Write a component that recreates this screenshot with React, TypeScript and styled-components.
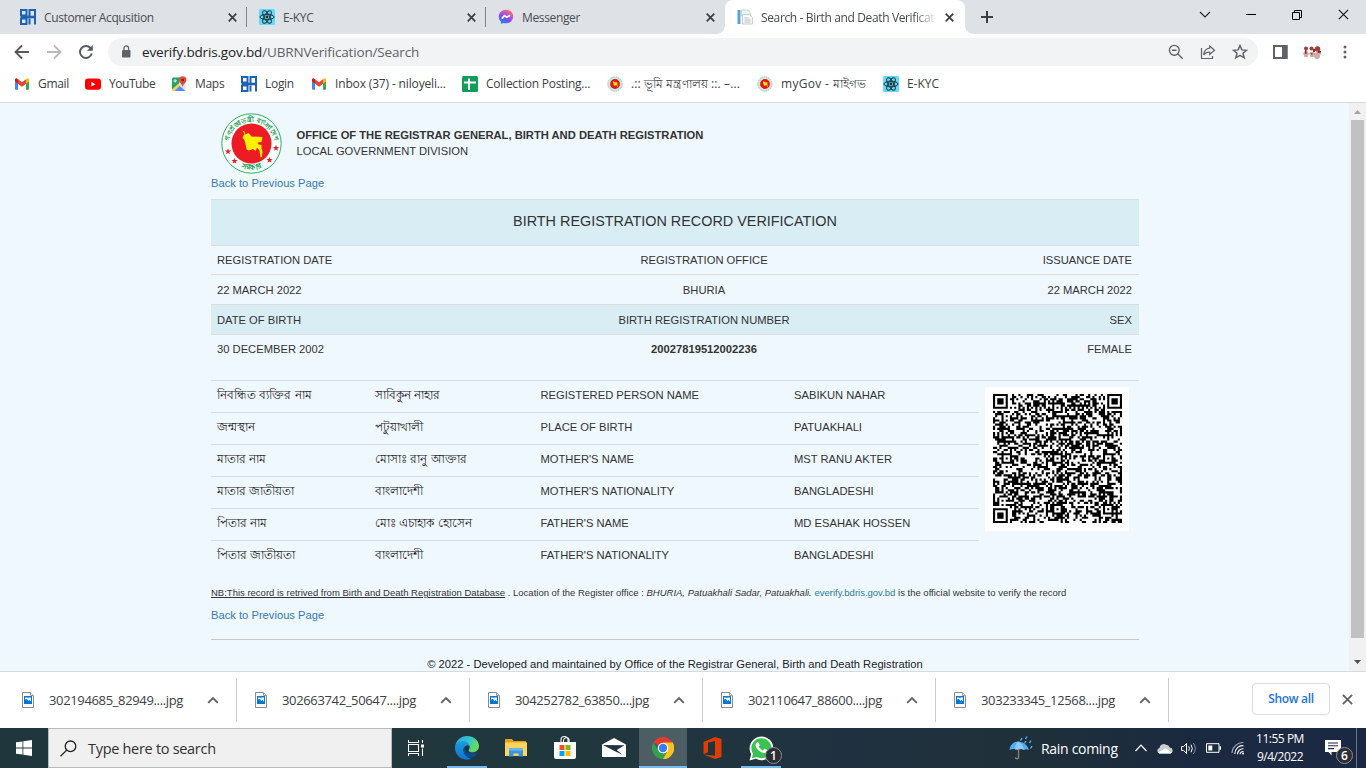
import React from 'react';
import styled, { createGlobalStyle, css } from 'styled-components';

const GlobalStyle = createGlobalStyle`
  * { box-sizing: border-box; }
  html, body { margin: 0; padding: 0; overflow: hidden; }
  body { font-family: "Open Sans", "Noto Sans", sans-serif; font-size: 12px; color: #3c4043; }
  svg { display: block; flex: none; }
`;

const Screen = styled.div`
  width: 1366px;
  height: 768px;
  display: flex;
  flex-direction: column;
  overflow: hidden;
  background: #fff;
`;

/* ---------- browser chrome ---------- */
const TabStrip = styled.div`
  height: 34px;
  flex: none;
  display: flex;
  padding-left: 8px;
  background: #dee1e6;
`;
const Tab = styled.div<{ $active?: boolean; $divider?: boolean }>`
  position: relative;
  width: ${(p) => (p.$active ? 240 : 239)}px;
  display: flex;
  align-items: center;
  padding: 0 ${(p) => (p.$active ? 11 : 10.5)}px 0 12px;
  gap: 8px;
  letter-spacing: -0.36px;
  color: ${(p) => (p.$active ? '#45494d' : '#4a4e52')};
  ${(p) => p.$active && css`
    background: #fff;
    border-radius: 8px 8px 0 0;
    &::before, &::after {
      content: '';
      position: absolute;
      bottom: 0;
      width: 8px;
      height: 8px;
    }
    &::before { left: -8px; background: radial-gradient(circle at 0 0, transparent 7.5px, #fff 8px); }
    &::after { right: -8px; background: radial-gradient(circle at 100% 0, transparent 7.5px, #fff 8px); }
  `}
  ${(p) => p.$divider && css`
    &::after {
      content: '';
      position: absolute;
      right: 0;
      top: 7px;
      width: 1px;
      height: 20px;
      background: #80868b;
    }
  `}
`;
const TabTitle = styled.span<{ $fade?: boolean }>`
  flex: 1;
  min-width: 0;
  white-space: nowrap;
  ${(p) => p.$fade && css`
    mask-image: linear-gradient(90deg, #000 152px, transparent 177px);
  `}
`;
const NewTab = styled.div`
  display: flex;
  align-items: center;
  padding-left: 16px;
`;
const WindowButtons = styled.div`
  margin-left: auto;
  display: grid;
  grid-template-columns: repeat(4, 46px);
  justify-items: center;
  align-items: center;
  height: 29px;
`;
const Toolbar = styled.div`
  height: 36px;
  flex: none;
  display: flex;
  align-items: center;
  padding-left: 14px;
`;
const NavButtons = styled.div`
  display: flex;
  gap: 16px;
  width: 94px;
`;
const Omnibox = styled.div`
  width: 1150px;
  height: 28px;
  border-radius: 14px;
  background: #f1f3f4;
  display: flex;
  align-items: center;
  padding: 0 10px 0 12px;
`;
const Url = styled.div`
  margin-left: 10px;
  flex: 1;
  font-size: 13.5px;
  letter-spacing: -0.16px;
  color: #5f6368;
  white-space: nowrap;
`;
const Host = styled.span`color: #202124;`;
const OmniActions = styled.div`
  display: flex;
  gap: 16px;
`;
const ToolbarActions = styled.div`
  flex: 1;
  display: flex;
  align-items: center;
  padding-left: 15px;
`;
const ProfileSlot = styled.div`margin-left: 14px;`;
const MenuSlot = styled.div`margin-left: 20px;`;
const Bookmarks = styled.div`
  height: 33px;
  flex: none;
  display: flex;
  padding: 0 0 5px 14px;
  border-bottom: 1px solid #d5d8dc;
`;
const Bookmark = styled.div<{ $w: number; $ls?: number }>`
  width: ${(p) => p.$w}px;
  display: flex;
  align-items: center;
  gap: 8px;
  white-space: nowrap;
  line-height: 18px;
  letter-spacing: ${(p) => p.$ls ?? -0.3}px;
`;

/* ---------- web page ---------- */
const Viewport = styled.div`
  height: 568px;
  flex: none;
  display: flex;
  overflow: hidden;
`;
const Page = styled.main`
  flex: 1;
  background: #eff8ff;
  padding: 10px 0 0 211px;
  font-family: "Liberation Sans", Arial, sans-serif;
  font-size: 11.2px;
  color: #333;
  line-height: 16px;
`;
const Content = styled.div`width: 928px;`;
const Masthead = styled.header`
  height: 60px;
  display: flex;
  align-items: center;
  padding-left: 9.5px;
  gap: 15px;
`;
const BackLink = styled.a`
  display: block;
  color: #337ab7;
  line-height: 20px;
`;
const SummaryTable = styled.section`margin-top: 6px;`;
const Banner = styled.h1`
  margin: 0;
  height: 46px;
  border-top: 1px solid #ddd;
  background: #d9edf5;
  text-align: center;
  font-size: 14.4px;
  font-weight: 400;
  line-height: 43px;
`;
const SummaryRow = styled.div<{ $h: number; $band?: boolean; $lh?: number }>`
  height: ${(p) => p.$h}px;
  border-top: 1px solid #ddd;
  background: ${(p) => (p.$band ? '#d9edf5' : 'transparent')};
  display: grid;
  grid-template-columns: 344px 298px 286px;
  line-height: ${(p) => p.$lh ?? 30}px;
`;
const SummaryCell = styled.div<{ $align?: 'center' | 'right'; $strong?: boolean }>`
  padding: 0 ${(p) => (p.$align === 'center' ? 6 : 7)}px 0 6px;
  text-align: ${(p) => p.$align ?? 'left'};
  font-weight: ${(p) => (p.$strong ? 700 : 400)};
`;
const Details = styled.section`
  display: grid;
  grid-template-columns: 768px 160px;
  height: 192px;
`;
const DetailRow = styled.div`
  height: 32px;
  display: grid;
  grid-template-columns: 158px 165.5px 253.5px 191px;
  border-top: 1px solid #ddd;
  line-height: 28px;
`;
const DetailCell = styled.div<{ $bn?: boolean }>`
  padding-left: 6px;
  white-space: nowrap;
  height: 30px;
  ${(p) => p.$bn && css`
    font-size: 12px;
    color: #222;
  `}
`;
const CodeCell = styled.div`
  border-top: 1px solid #ddd;
  padding: 6px 0 0 6px;
`;
const CodeFrame = styled.div`
  width: 144px;
  height: 144px;
  padding: 7px 8px;
  background: #fff;
`;
const Note = styled.p`
  margin: 12px 0 4px;
  font-size: 9.5px;
  line-height: 17px;
  white-space: nowrap;
`;
const NoteLink = styled.a`color: #2b7a94;`;
const Footer = styled.footer`
  margin-top: 14px;
  border-top: 1px solid #c8c8c8;
  padding-top: 16px;
  text-align: center;
  color: #222;
`;
const ScrollTrack = styled.div`
  width: 17px;
  background: #f1f1f1;
  display: flex;
  flex-direction: column;
  align-items: center;
`;
const ScrollThumb = styled.div`
  width: 13px;
  height: 518px;
  background: #c1c1c1;
`;
const ScrollArrow = styled.div<{ $down?: boolean }>`
  height: 17px;
  padding-top: ${(p) => (p.$down ? 6 : 7)}px;
  ${(p) => p.$down && 'margin-top: auto;'}
`;

/* ---------- download shelf ---------- */
const Shelf = styled.div`
  height: 57px;
  flex: none;
  border-top: 1px solid #d5dbe0;
  display: flex;
  align-items: center;
  padding-left: 4px;
`;
const Download = styled.div`
  width: 233px;
  height: 44px;
  border-right: 1px solid #ccc;
  display: flex;
  align-items: center;
  padding: 0 17px 0 18px;
`;
const FileName = styled.span`
  margin-left: 15px;
  flex: 1;
  font-size: 13px;
  letter-spacing: -0.35px;
`;
const ShowAll = styled.button`
  margin: 0 0 2px 83px;
  width: 78px;
  height: 32px;
  border: 1px solid #dadce0;
  border-radius: 4px;
  background: #fff;
  color: #1a73e8;
  font: 600 12px "Open Sans", sans-serif;
  letter-spacing: -0.3px;
  padding: 0 0 1px;
`;
const ShelfClose = styled.div`margin: 0 0 2px 12px;`;

/* ---------- task bar ---------- */
const Taskbar = styled.div`
  height: 40px;
  flex: none;
  display: flex;
  background: linear-gradient(90deg, #20363d 0, #21373e 45%, #1f3140 62%, #1f3039 75%, #1b2940 87%, #1b2843 100%);
  color: #fff;
`;
const Start = styled.div`
  width: 48px;
  display: grid;
  place-items: center;
`;
const SearchBox = styled.div`
  width: 344px;
  background: #f0f0f0;
  border: 1px solid #b9b9b9;
  display: flex;
  align-items: center;
  padding-left: 11px;
  gap: 11px;
  color: #303030;
  font-size: 14.5px;
  letter-spacing: -0.3px;
`;
const Apps = styled.div`
  display: flex;
  gap: 1px;
  margin-left: 3px;
`;
const TaskButton = styled.div<{ $active?: boolean; $running?: boolean }>`
  position: relative;
  width: 48px;
  display: grid;
  place-items: center;
  background: ${(p) => (p.$active ? '#4c5d64' : 'transparent')};
  ${(p) => (p.$active || p.$running) && css`
    &::after {
      content: '';
      position: absolute;
      bottom: 0;
      left: ${p.$active ? 0 : 4}px;
      right: ${p.$active ? 0 : 4}px;
      height: 2px;
      background: #76b9ed;
    }
  `}
`;
const CountBadge = styled.span`
  position: absolute;
  right: 3px;
  top: 19px;
  width: 17px;
  height: 17px;
  border-radius: 50%;
  border: 1px solid #8a8f94;
  background: #2b2e33;
  color: #fff;
  font-size: 12px;
  font-weight: 600;
  line-height: 15px;
  text-align: center;
`;
const Tray = styled.div`
  margin-left: auto;
  width: 357px;
  display: flex;
  align-items: center;
`;
const Weather = styled.div`
  width: 124px;
  display: flex;
  align-items: center;
  gap: 8px;
  font-size: 14px;
  letter-spacing: -0.3px;
  white-space: nowrap;
`;
const TrayIcons = styled.div`
  display: grid;
  grid-template-columns: 16px 32px 16px 32px 18px;
  justify-items: center;
  align-items: center;
`;
const Clock = styled.div`
  width: 66px;
  text-align: center;
  font-size: 12px;
  line-height: 18px;
  letter-spacing: -0.48px;
  padding-bottom: 1px;
`;
const ActionCenter = styled.div`
  position: relative;
  width: 44px;
  height: 40px;
  padding: 12px 0 0 12px;
  margin-right: 4px;
  border-right: 1px solid #68747f;
`;

/* ---------- icons ---------- */
const BuildingIcon = () => (
  <svg width="16" height="16" viewBox="0 0 16 16" fill="none" stroke="#1d62b5" strokeWidth="2">
    <path d="M1 1h5.500v5.500H1zM9.500 6.500V1H15v14.500M9.500 9.500v6M1 9.500h5.500V15H1zM6.500 8v2M9.500 5v3" />
    <path d="M1 8h14" strokeWidth="2.600" />
  </svg>
);
const ReactIcon = () => (
  <svg width="16" height="16" viewBox="0 0 16 16">
    <rect width="16" height="16" rx="1.500" fill="#61dafb" />
    <g fill="none" stroke="#20333b" strokeWidth="1">
      <ellipse cx="8" cy="8" rx="7" ry="2.700" />
      <ellipse cx="8" cy="8" rx="7" ry="2.700" transform="rotate(60 8 8)" />
      <ellipse cx="8" cy="8" rx="7" ry="2.700" transform="rotate(120 8 8)" />
    </g>
    <circle cx="8" cy="8" r="1.400" fill="#20333b" />
  </svg>
);
const MessengerIcon = () => (
  <svg width="16" height="16" viewBox="0 0 16 16">
    <defs>
      <radialGradient id="msgr" cx="20%" cy="100%" r="110%">
        <stop offset="0" stopColor="#0a8cff" />
        <stop offset="0.55" stopColor="#8a45ff" />
        <stop offset="1" stopColor="#ff6a6a" />
      </radialGradient>
    </defs>
    <path d="M8 .8C3.900.8.8 3.800.8 7.700c0 2.100.9 3.900 2.300 5.100v2.300l2.200-1.200c.9.3 1.700.4 2.700.4 4.100 0 7.200-3 7.200-6.800S12.100.8 8 .8z" fill="url(#msgr)" />
    <path d="M3.800 9.600l2.600-3 2.400 1.600 3.400-2" fill="none" stroke="#fff" strokeWidth="1.700" />
  </svg>
);
const DocsIcon = () => (
  <svg width="16" height="16" viewBox="0 0 16 16">
    <rect x="0.500" y="1" width="3" height="14" fill="#58a6d6" />
    <path d="M4.500 1h7l2 3v3h-9z" fill="#eef2f5" stroke="#c6cdd3" strokeWidth=".8" />
    <path d="M5.500 5.500h7l3 3V15h-10z" fill="#f4f6f8" stroke="#bcc4cb" strokeWidth=".8" />
    <path d="M7.500 9h4M7.500 11h6M7.500 13h6" stroke="#b4bcc4" strokeWidth=".8" />
  </svg>
);
const GmailIcon = () => (
  <svg width="16" height="16" viewBox="0 0 16 16">
    <path d="M1 4.500V13c0 .4.400.8.800.8H4V6.500z" fill="#4285f4" />
    <path d="M15 4.500V13c0 .4-.400.8-.800.8H12V6.500z" fill="#34a853" />
    <path d="M4 3.200l4 3.100 4-3.100v4.500l-4 3.100-4-3.100z" fill="#ea4335" />
    <path d="M12 3.200l.9-.600c.9-.700 2.100 0 2.100 1.100v1.600l-3 2.400z" fill="#fbbc04" />
    <path d="M4 3.200l-.9-.600C2.200 1.900 1 2.600 1 3.700v1.600l3 2.400z" fill="#c5221f" />
  </svg>
);
const YouTubeIcon = () => (
  <svg width="16" height="16" viewBox="0 0 16 16">
    <rect x="0" y="2.500" width="16" height="11.300" rx="3" fill="#f00" />
    <path d="M6.400 5.800v4.700l4-2.350z" fill="#fff" />
  </svg>
);
const MapsIcon = () => (
  <svg width="16" height="16" viewBox="0 0 16 16">
    <rect x="1" y="1.500" width="13.500" height="13.500" rx="1.500" fill="#dfe3e6" />
    <path d="M1 3a1.500 1.500 0 0 1 1.500-1.500H9L8 8l-7 6z" fill="#23a566" />
    <path d="M1 13.500l6.500-6 1.800 1.700L3.500 15h-1A1.500 1.500 0 0 1 1 13.500z" fill="#fbd04b" />
    <path d="M3.500 15L8.600 9.900l5.400 4.700-1 .4z" fill="#4c8df6" />
    <path d="M11.700.3a3.700 3.700 0 0 0-3.700 3.700c0 2.600 2.900 3.600 3.700 7 .8-3.400 3.700-4.400 3.700-7A3.700 3.700 0 0 0 11.700.3z" fill="#e5483c" />
    <circle cx="11.700" cy="4" r="1.300" fill="#8c1f17" />
    <path d="M5.800 4.600H4.200v1h.8c-.300 1-2 .7-2-.7s1.300-1.500 1.900-.9" fill="none" stroke="#fff" strokeWidth=".8" />
  </svg>
);
const SheetIcon = () => (
  <svg width="16" height="16" viewBox="0 0 16 16">
    <rect width="16" height="16" rx="1.500" fill="#0f9d58" />
    <path d="M2 6.500h12M7 2.500v11.500" stroke="#fff" strokeWidth="2" />
  </svg>
);
const countryShape = 'M-9-13l2 1 1 3 3-1.500 3 3.500 11 .5-1 5-4 .5 1 2 3 .5v4l1 2-.5 6-1.500.5-1-7-2.500-3-1.500 3.500-2.500-2-4 1.500-2.500-1-1-5.500-1-3.500-2-3 2-3.500z';
const SealIcon = () => (
  <svg width="16" height="16" viewBox="-8 -8 16 16">
    <circle r="7.200" fill="#cfeadb" stroke="#8cc9a8" strokeWidth="1" strokeDasharray="1.500 .8" />
    <circle r="4.900" fill="#e8131c" />
    <path d={countryShape} fill="#fff100" transform="scale(.24)" />
  </svg>
);
const star = 'M0-3.300L.85-1 3.200-1 1.300.5 2 2.800 0 1.400-2 2.800-1.300.5-3.200-1-.85-1z';
const GovernmentSeal = () => (
  <svg width="61" height="61" viewBox="-30.500 -30.500 61 61">
    <defs>
      <path id="ringTop" d="M-22.500 1A22.500 22.500 0 1 1 22.500 1" />
      <path id="ringBottom" d="M-16 21A26.400 26.400 0 0 0 16 21" />
    </defs>
    <circle r="29.700" fill="#fafffd" stroke="#27ae60" strokeWidth="1" />
    <circle r="20" fill="#ed1c24" />
    <path d={countryShape} fill="#fff100" />
    <g fill="#149a4b" fontSize="6.800" fontWeight="700" textAnchor="middle">
      <text><textPath href="#ringTop" startOffset="50%">গণপ্রজাতন্ত্রী বাংলাদেশ</textPath></text>
      <text fontSize="7.500"><textPath href="#ringBottom" startOffset="50%">সরকার</textPath></text>
    </g>
    <g fill="#ed1c24">
      <path d={star} transform="translate(-23.500 8)" />
      <path d={star} transform="translate(-17 17.500)" />
      <path d={star} transform="translate(18 16.500)" />
      <path d={star} transform="translate(24.500 4.500)" />
    </g>
  </svg>
);
const CloseIcon = ({ size = 9, color = '#3c4043', w = 1.8 }: { size?: number; color?: string; w?: number }) => (
  <svg width={size} height={size} viewBox="0 0 10 10" stroke={color} strokeWidth={(w * 10) / size}>
    <path d="M.8.8l8.400 8.400M9.200.8L.8 9.200" />
  </svg>
);
const ImageFileIcon = () => (
  <svg width="12" height="16" viewBox="0 0 12 16">
    <path d="M.5.5h8l3 3v12H.5z" fill="#fafafa" stroke="#8b8b8b" />
    <path d="M8.500.5v3h3" fill="#fff" stroke="#9a9a9a" />
    <rect x="2" y="4" width="8" height="8" fill="#0078d7" />
    <path d="M3 5.500h6v4L7.500 8 6.500 9 5 7 3 7.500z" fill="#fff" />
    <path d="M5 5.500h1.500v1z" fill="#0078d7" />
  </svg>
);

/* ---------- QR pattern ---------- */
const QR_SIZE = 61;
const qrPath = (() => {
  const rings = (dx: number, dy: number, r: number) => {
    const d = Math.max(Math.abs(dx), Math.abs(dy));
    if (d > r) return null;
    return r === 4 ? d !== 2 && d !== 4 : d !== 1;
  };
  const marks: [number, number, number][] = [[3, 3, 4], [57, 3, 4], [3, 57, 4]];
  for (const x of [6, 30, 54]) for (const y of [6, 30, 54]) {
    if (!((x === 6 && y !== 30) || (x === 54 && y === 6))) marks.push([x, y, 2]);
  }
  let seed = 20413;
  let d = '';
  for (let y = 0; y < QR_SIZE; y++) {
    for (let x = 0; x < QR_SIZE; x++) {
      seed = (Math.imul(seed, 1664525) + 1013904223) >>> 0;
      let on = ((seed >>> 16) & 255) < 132;
      if (x === 6 || y === 6) on = (x + y) % 2 === 0;
      for (const [mx, my, r] of marks) {
        const v = rings(x - mx, y - my, r);
        if (v !== null) on = v;
      }
      if (on) d += `M${x} ${y}h1v1h-1z`;
    }
  }
  return d;
})();

/* ---------- data ---------- */
const records = [
  ['নিবন্ধিত ব্যক্তির নাম', 'সাবিকুন নাহার', 'REGISTERED PERSON NAME', 'SABIKUN NAHAR'],
  ['জন্মস্থান', 'পটুয়াখালী', 'PLACE OF BIRTH', 'PATUAKHALI'],
  ['মাতার নাম', 'মোসাঃ রানু আক্তার', "MOTHER'S NAME", 'MST RANU AKTER'],
  ['মাতার জাতীয়তা', 'বাংলাদেশী', "MOTHER'S NATIONALITY", 'BANGLADESHI'],
  ['পিতার নাম', 'মোঃ এচাহাক হোসেন', "FATHER'S NAME", 'MD ESAHAK HOSSEN'],
  ['পিতার জাতীয়তা', 'বাংলাদেশী', "FATHER'S NATIONALITY", 'BANGLADESHI'],
];
const downloads = ['302194685_82949....jpg', '302663742_50647....jpg', '304252782_63850....jpg', '302110647_88600....jpg', '303233345_12568....jpg'];
const bookmarks: [string, React.ReactNode, number, number?][] = [
  ['Gmail', <GmailIcon />, 71],
  ['YouTube', <YouTubeIcon />, 86, -0.45],
  ['Maps', <MapsIcon />, 70],
  ['Login', <BuildingIcon />, 70],
  ['Inbox (37) - niloyeli...', <GmailIcon />, 151, -0.15],
  ['Collection Posting...', <SheetIcon />, 145, -0.24],
  ['.:: ভূমি মন্ত্রণালয় ::. –...', <SealIcon />, 150, 0.1],
  ['myGov - মাইগভ', <SealIcon />, 126, 0.3],
  ['E-KYC', <ReactIcon />, 70, -0.05],
];

export default function App() {
  return (
    <Screen>
      <GlobalStyle />
      <TabStrip>
        <Tab $divider><BuildingIcon /><TabTitle>Customer Acqusition</TabTitle><CloseIcon /></Tab>
        <Tab $divider><ReactIcon /><TabTitle>E-KYC</TabTitle><CloseIcon /></Tab>
        <Tab><MessengerIcon /><TabTitle>Messenger</TabTitle><CloseIcon /></Tab>
        <Tab $active><DocsIcon /><TabTitle $fade>Search - Birth and Death Verificat</TabTitle><CloseIcon /></Tab>
        <NewTab>
          <svg width="12" height="12" viewBox="0 0 12 12" stroke="#3c4043" strokeWidth="2"><path d="M6 0v12M0 6h12" /></svg>
        </NewTab>
        <WindowButtons>
          <svg width="12" height="8" viewBox="0 0 12 8" fill="none" stroke="#222" strokeWidth="1.100"><path d="M1 1l5 5 5-5" /></svg>
          <svg width="10" height="1" viewBox="0 0 10 1"><rect width="10" height="1" fill="#000" /></svg>
          <svg width="10" height="10" viewBox="0 0 10 10" fill="none" stroke="#000"><path d="M.5 2.500h7v7h-7zM2.500 2.500v-2h7v7h-2" /></svg>
          <CloseIcon size={11} color="#111" w={1.100} />
        </WindowButtons>
      </TabStrip>
      <Toolbar>
        <NavButtons>
          <svg width="16" height="16" viewBox="0 0 16 16" fill="none" stroke="#55595e" strokeWidth="1.800"><path d="M15 8H2M8 1.500L1.500 8 8 14.500" /></svg>
          <svg width="16" height="16" viewBox="0 0 16 16" fill="none" stroke="#b8babd" strokeWidth="1.800"><path d="M1 8h13M8 1.500L14.500 8 8 14.500" /></svg>
          <svg width="16" height="16" viewBox="0 0 16 16" fill="none" stroke="#55595e" strokeWidth="1.900"><path d="M13.800 9.500A6 6 0 1 1 12.500 4l1 1.200" /><path d="M14.800 1v5.800H9z" fill="#55595e" stroke="none" /></svg>
        </NavButtons>
        <Omnibox>
          <svg width="12" height="14" viewBox="0 0 12 14"><rect x="2" y="5" width="8.500" height="7.500" rx="1" fill="#5f6368" /><path d="M3.900 5.500V3.300a2.350 2.350 0 0 1 4.700 0v2.200" fill="none" stroke="#5f6368" strokeWidth="1.300" /></svg>
          <Url><Host>everify.bdris.gov.bd</Host>/UBRNVerification/Search</Url>
          <OmniActions>
            <svg width="16" height="16" viewBox="0 0 16 16" fill="none" stroke="#5f6368" strokeWidth="1.400"><circle cx="6.300" cy="6.300" r="4.900" /><path d="M9.900 9.900l4.800 4.800M4 6.300h4.600" /></svg>
            <svg width="16" height="16" viewBox="0 0 16 16" fill="none" stroke="#5f6368" strokeWidth="1.200"><path d="M1.500 4v10.500h11V12" /><path d="M9.700 2l4.800 4.200-4.800 4.200V8c-3 0-4.700 1-6 3 .3-3.500 2.300-6.400 6-6.800z" /></svg>
            <svg width="16" height="16" viewBox="0 0 16 16" fill="none" stroke="#5f6368" strokeWidth="1.500"><path d="M8 1.700l1.900 4.200 4.600.4-3.500 3 1.100 4.500L8 11.400l-4.100 2.400L5 9.300l-3.500-3 4.600-.4z" /></svg>
          </OmniActions>
        </Omnibox>
        <ToolbarActions>
          <svg width="15" height="14" viewBox="0 0 15 14"><path d="M1 1h12.500v12H1z" fill="none" stroke="#5f6368" strokeWidth="2" /><rect x="9" y="0" width="5.500" height="14" fill="#5f6368" /></svg>
          <ProfileSlot>
            <svg width="21" height="16" viewBox="0 0 21 16">
              <g fill="#a63b36"><circle cx="4" cy="4.500" r="2" /><circle cx="9.500" cy="4.500" r="2" /><circle cx="15.500" cy="5" r="2.800" /><path d="M8 8l3 2 8-3-1 3-8 1z" /></g>
              <g fill="#d3aaa5"><rect x="2" y="7" width="4" height="6" rx="1" /><rect x="8" y="8" width="4" height="5" rx="1" /><circle cx="15" cy="12" r="3" /><path d="M1 9h18v1.500H1z" /></g>
              <g fill="#7d3532"><rect x="3" y="6" width="1.500" height="4" /><rect x="11" y="5" width="2" height="3" /><rect x="16" y="7" width="3" height="1.500" /><rect x="9" y="9" width="1.500" height="1.500" /></g>
            </svg>
          </ProfileSlot>
          <MenuSlot>
            <svg width="4" height="14" viewBox="0 0 4 14" fill="#5f6368"><circle cx="2" cy="2" r="1.500" /><circle cx="2" cy="7" r="1.500" /><circle cx="2" cy="12" r="1.500" /></svg>
          </MenuSlot>
        </ToolbarActions>
      </Toolbar>
      <Bookmarks>
        {bookmarks.map(([label, icon, w, ls]) => (
          <Bookmark key={label} $w={w} $ls={ls}>{icon}<span>{label}</span></Bookmark>
        ))}
      </Bookmarks>

      <Viewport>
        <Page>
          <Content>
            <Masthead>
              <GovernmentSeal />
              <div>
                <b>OFFICE OF THE REGISTRAR GENERAL, BIRTH AND DEATH REGISTRATION</b>
                <div>LOCAL GOVERNMENT DIVISION</div>
              </div>
            </Masthead>
            <BackLink>Back to Previous Page</BackLink>
            <SummaryTable>
              <Banner>BIRTH REGISTRATION RECORD VERIFICATION</Banner>
              <SummaryRow $h={29} $lh={28}>
                <SummaryCell>REGISTRATION DATE</SummaryCell>
                <SummaryCell $align="center">REGISTRATION OFFICE</SummaryCell>
                <SummaryCell $align="right">ISSUANCE DATE</SummaryCell>
              </SummaryRow>
              <SummaryRow $h={30}>
                <SummaryCell>22 MARCH 2022</SummaryCell>
                <SummaryCell $align="center">BHURIA</SummaryCell>
                <SummaryCell $align="right">22 MARCH 2022</SummaryCell>
              </SummaryRow>
              <SummaryRow $h={30} $band>
                <SummaryCell>DATE OF BIRTH</SummaryCell>
                <SummaryCell $align="center">BIRTH REGISTRATION NUMBER</SummaryCell>
                <SummaryCell $align="right">SEX</SummaryCell>
              </SummaryRow>
              <SummaryRow $h={46} $lh={28}>
                <SummaryCell>30 DECEMBER 2002</SummaryCell>
                <SummaryCell $align="center" $strong>20027819512002236</SummaryCell>
                <SummaryCell $align="right">FEMALE</SummaryCell>
              </SummaryRow>
            </SummaryTable>
            <Details>
              <div>
                {records.map(([bnLabel, bnValue, label, value]) => (
                  <DetailRow key={label}>
                    <DetailCell $bn>{bnLabel}</DetailCell>
                    <DetailCell $bn>{bnValue}</DetailCell>
                    <DetailCell>{label}</DetailCell>
                    <DetailCell>{value}</DetailCell>
                  </DetailRow>
                ))}
              </div>
              <CodeCell>
                <CodeFrame>
                  <svg width="129" height="129" viewBox={`0 0 ${QR_SIZE} ${QR_SIZE}`}><path d={qrPath} fill="#000" /></svg>
                </CodeFrame>
              </CodeCell>
            </Details>
            <Note>
              <u>NB:This record is retrived from Birth and Death Registration Database</u> . Location of the Register office : <i>BHURIA, Patuakhali Sadar, Patuakhali.</i> <NoteLink>everify.bdris.gov.bd</NoteLink> is the official website to verify the record
            </Note>
            <BackLink>Back to Previous Page</BackLink>
            <Footer>© 2022 - Developed and maintained by Office of the Registrar General, Birth and Death Registration</Footer>
          </Content>
        </Page>
        <ScrollTrack>
          <ScrollArrow><svg width="7" height="4" viewBox="0 0 7 4"><path d="M0 4l3.500-4L7 4z" fill="#a3a3a3" /></svg></ScrollArrow>
          <ScrollThumb />
          <ScrollArrow $down><svg width="7" height="4" viewBox="0 0 7 4"><path d="M0 0l3.500 4L7 0z" fill="#505050" /></svg></ScrollArrow>
        </ScrollTrack>
      </Viewport>

      <Shelf>
        {downloads.map((name) => (
          <Download key={name}>
            <ImageFileIcon />
            <FileName>{name}</FileName>
            <svg width="12" height="8" viewBox="0 0 12 8" fill="none" stroke="#5f6368" strokeWidth="1.900"><path d="M1.200 6.800L6 2l4.800 4.800" /></svg>
          </Download>
        ))}
        <ShowAll>Show all</ShowAll>
        <ShelfClose><CloseIcon size={11} color="#5f6368" w={1.800} /></ShelfClose>
      </Shelf>

      <Taskbar>
        <Start>
          <svg width="16" height="16" viewBox="0 0 16 16" fill="#fff"><path d="M0 2.300L6.500 1.400v6.200H0zM7.300 1.300L16 0v7.600H7.300zM0 8.400h6.500v6.200L0 13.700zM7.300 8.400H16V16l-8.700-1.300z" /></svg>
        </Start>
        <SearchBox>
          <svg width="17" height="17" viewBox="0 0 17 17" fill="none" stroke="#222" strokeWidth="1.300"><circle cx="10.500" cy="6.300" r="5.300" /><path d="M6.700 10.100L.5 16.300" /></svg>
          Type here to search
        </SearchBox>
        <TaskButton>
          <svg width="16" height="16" viewBox="0 0 16 16" fill="none" stroke="#fff" strokeWidth="1.100"><path d="M.5 4.500h10v7H.5zM.5 0v2.500h10V0M.5 16v-2.500h10V16M14.500 0v3M14.500 8.500V16" /><rect x="13" y="4.500" width="3" height="3" fill="#fff" stroke="none" /></svg>
        </TaskButton>
        <Apps>
          <TaskButton $running>
            <svg width="24" height="24" viewBox="0 0 24 24">
              <defs>
                <linearGradient id="edgeTop" x1="0" y1="0" x2="1" y2=".4"><stop offset="0" stopColor="#2aa7e8" /><stop offset=".6" stopColor="#35c5c9" /><stop offset="1" stopColor="#66dc5c" /></linearGradient>
                <linearGradient id="edgeLeft" x1="0" y1="0" x2="0" y2="1"><stop offset="0" stopColor="#1b9de2" /><stop offset="1" stopColor="#1073cf" /></linearGradient>
              </defs>
              <path d="M.2 10.500C1 4.500 5.800 0 12 0c6.800 0 12 4.600 12 10 0 3.800-2.900 6.300-6.200 6.300-2.700 0-4.200-.9-4.200-1.900 0-.7 1.100-1.200 1.100-3.200 0-2.500-3-4.900-6.700-4.900-4 0-6.900 2-7.800 4.200z" fill="url(#edgeTop)" />
              <path d="M0 12c0-4 3.700-6.900 8-6.900 3.900 0 6.700 2.600 6.700 5.600-.8-1-2-1.500-3-1.300-2.400.6-3.700 3-3.300 5.700.5 3.700 4 6.600 8 7.900C7.500 26 0 19.500 0 12z" fill="url(#edgeLeft)" />
              <path d="M9.200 11.500c-1.900 4.500 1.300 9.900 7.800 10.300 2.300-1 4.200-2.800 5.300-4.600.3-.6-.2-1-.8-.7C17.800 18.300 11 17.300 9.200 11.500z" fill="#0c4a91" />
            </svg>
          </TaskButton>
          <TaskButton>
            <svg width="22" height="20" viewBox="0 0 22 20"><path d="M0 1h7l1.500 2H21v6H0z" fill="#e2a31b" /><path d="M0 4.500h22V18H0z" fill="#ffd45e" /><path d="M4 10h14v8.500h-4.500v-3h-5v3H4z" fill="#3d94dc" /><path d="M4 10h14v2.500H4z" fill="#6cb8ee" /></svg>
          </TaskButton>
          <TaskButton>
            <svg width="24" height="24" viewBox="0 0 24 24"><path d="M8 6V4a3.500 3.500 0 0 1 7 0v2M10.500 6V4.500a3 3 0 0 1 5.500-1.500V6" fill="none" stroke="#e8e8e8" strokeWidth="1.200" /><path d="M1 6h22v15a2 2 0 0 1-2 2H3a2 2 0 0 1-2-2z" fill="#fff" /><path d="M6.500 9h5v5h-5z" fill="#f25022" /><path d="M12.500 9h5v5h-5z" fill="#7fba00" /><path d="M6.500 15h5v5h-5z" fill="#00a4ef" /><path d="M12.500 15h5v5h-5z" fill="#ffb900" /></svg>
          </TaskButton>
          <TaskButton>
            <svg width="24" height="20" viewBox="0 0 24 20"><path d="M0 6.500L12 0l12 6.500V19H0z" fill="#fff" /><path d="M1 7l21.500.2-7.700 4.700 5.200 4.500L12.500 13z" fill="#21343d" /></svg>
          </TaskButton>
          <TaskButton $active>
            <svg width="22" height="22" viewBox="0 0 22 22"><path d="M11 11L1.470 5.500A11 11 0 0 1 20.530 5.500z" fill="#e33b2e" /><path d="M11 11l9.530-5.500A11 11 0 0 1 11 22z" fill="#fcc31e" /><path d="M11 5.500h9.530A11 11 0 0 1 11 22l4.760-8.200z" fill="#fcc31e" /><path d="M11 22A11 11 0 0 1 1.470 5.500L6.240 13.800 11 16.500l4.200-1.500z" fill="#2fa14f" /><circle cx="11" cy="11" r="5.300" fill="#fff" /><circle cx="11" cy="11" r="4.200" fill="#3b7ded" /></svg>
          </TaskButton>
          <TaskButton>
            <svg width="19" height="22" viewBox="0 0 19 22"><path d="M.5 5L12 0l6.500 2v18L12 22 .5 17.500l11.500 1.300V4L5 5.700v9.600l-4.500 2z" fill="#e03c06" /></svg>
          </TaskButton>
          <TaskButton $running>
            <svg width="25" height="25" viewBox="0 0 25 25"><path d="M.5 24.500l1.700-6.200A11.900 11.900 0 1 1 6.800 22.800z" fill="#fff" /><path d="M2.800 22.200l1.300-4.400A10 10 0 1 1 7.700 21z" fill="#3ac351" /><path d="M8.200 6.500c.5-.5 1.200-.4 1.500.2l.9 2c.2.400 0 .8-.9 1.900.9 1.900 2.400 3.100 4.200 3.800l1.300-1.500c.3-.3.600-.3 2.800.9.500.3.300 1.400-.1 2-.8 1.200-2.500 1.500-4 1-4-1.200-6.800-4.400-7.300-7-.2-1.300.5-2.500 1.600-3.300z" fill="#fff" /></svg>
            <CountBadge>1</CountBadge>
          </TaskButton>
        </Apps>
        <Tray>
          <Weather>
            <svg width="24" height="24" viewBox="0 0 24 24"><path d="M.5 14C1 8.500 5 5.500 9 5.500c5 0 9.500 3.500 11 8.500-2-1-3.500-1-5 0-2-1.200-4-1.200-6 0-2.500-1.200-6-1.200-8.500 0z" fill="#55adf0" /><path d="M9 5.500c-2 2-3 5-3 8 1 0 2 0 3 .5 2-1.200 4-1.200 6 0-.5-4-3-7-6-8.500z" fill="#8accfb" /><path d="M9.500 13v8.500c0 1.800-3 1.800-3-.3" fill="none" stroke="#8a7a72" strokeWidth="1.500" /><path d="M13 2l-1.500 2.500M18 .5L16.500 3M22 4.500L20.500 7M17 5l-1.500 2.500M23 10l-1.500 2.500" stroke="#49b4f2" strokeWidth="1.400" /></svg>
            Rain coming
          </Weather>
          <TrayIcons>
            <svg width="12" height="8" viewBox="0 0 12 8" fill="none" stroke="#fff" strokeWidth="1.200"><path d="M.5 7L6 1.200 11.500 7" /></svg>
            <svg width="16" height="11" viewBox="0 0 16 11"><path d="M2.600 10.500A2.800 2.800 0 0 1 2.500 5 4.200 4.200 0 0 1 9 1.700a4 4 0 0 1 3.800 2.700 3.100 3.100 0 0 1 .5 6.100z" fill="#c9cdd1" /><path d="M1.200 9.500l7.500-4.200 6 4.500-1.500.7H2.600z" fill="#fff" /></svg>
            <svg width="16" height="13" viewBox="0 0 16 13" fill="none" stroke="#fff" strokeWidth="1"><path d="M.6 4.500h2L5.500 1.500v10L2.600 8.500h-2zM7.700 4.300q1.500 2.200 0 4.400M10 2.700q2.600 3.800 0 7.600" /><path d="M12.300 1q4 5.500 0 11" stroke="#8690a0" /></svg>
            <svg width="15" height="10" viewBox="0 0 15 10"><path d="M.5.7h12.500v8.600H.5z" fill="none" stroke="#fff" /><path d="M13.500 3.200H15v3.600h-1.500z" fill="#fff" /><path d="M2.300 2.500h4v5h-4z" fill="#fff" /></svg>
            <svg width="14" height="14" viewBox="0 0 14 14" fill="none" stroke="#fff" strokeWidth="1.100"><path d="M1 12A11 11 0 0 1 12.500 1.500" stroke="#9aa4b3" /><path d="M3.800 13A8 8 0 0 1 12.500 4.700M6.500 13.300a5.500 5.500 0 0 1 6-5.500M9 13.300a3 3 0 0 1 3.500-2.700" /><circle cx="12" cy="12.500" r="1" fill="#fff" stroke="none" /></svg>
          </TrayIcons>
          <Clock>11:55 PM<br />9/4/2022</Clock>
          <ActionCenter>
            <svg width="16" height="16" viewBox="0 0 16 16"><path d="M0 0h16v12H6.500v3.500L3.500 12H0z" fill="#fff" /><path d="M3 3h10M3 5.800h10M3 8.600h6" stroke="#1c2b44" strokeWidth="1.100" /></svg>
            <CountBadge>6</CountBadge>
          </ActionCenter>
        </Tray>
      </Taskbar>
    </Screen>
  );
}
